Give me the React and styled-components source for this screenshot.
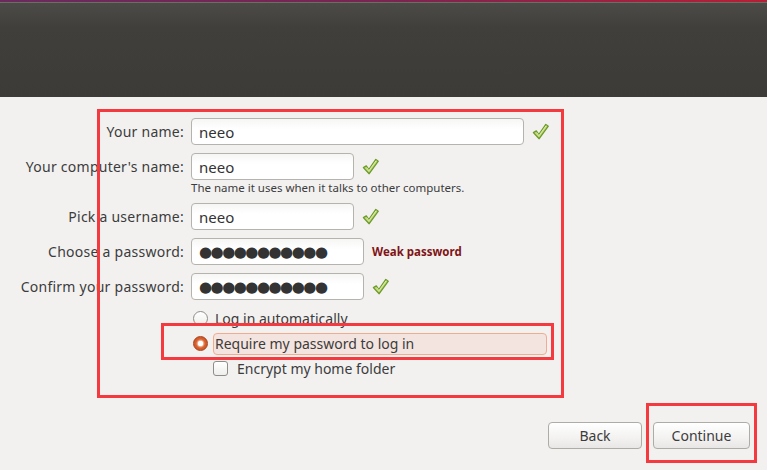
import React from "react";
import styled, { createGlobalStyle } from "styled-components";

const GlobalStyle = createGlobalStyle`
  html, body {
    margin: 0;
    padding: 0;
    background: #f2f1f0;
    font-family: "Noto Sans", "DejaVu Sans", sans-serif;
    color: #3c3c3c;
  }
`;

function Check() {
  return (
    <CheckIcon viewBox="0 0 20 20" width="19" height="19">
      <path
        d="M2.5 11.2 L5.6 9.4 L8.2 13.2 L15.6 2.6 L18.2 4.4 L8.6 17.6 Z"
        fill="#c2db79"
        stroke="#6c9a2c"
        strokeWidth="1.4"
        strokeLinejoin="round"
      />
      <path d="M6 11 L8.3 14.4 L16 3.8" fill="none" stroke="#e6f0b4" strokeWidth="0.9" />
    </CheckIcon>
  );
}

export default function App() {
  return (
    <>
      <GlobalStyle />
      <Page>
        <Header>
          <TopStripe />
          <HeaderLine />
        </Header>
        <Content>
          <Form>
            <Row>
              <Label>Your name:</Label>
              <Field width={333}>neeo</Field>
              <Check />
            </Row>
            <Row>
              <Label>Your computer's name:</Label>
              <Field width={163}>neeo</Field>
              <Check />
            </Row>
            <Hint>The name it uses when it talks to other computers.</Hint>
            <Row>
              <Label>Pick a username:</Label>
              <Field width={163}>neeo</Field>
              <Check />
            </Row>
            <Row>
              <Label>Choose a password:</Label>
              <Field width={173} dots>●●●●●●●●●●●</Field>
              <Weak>Weak password</Weak>
            </Row>
            <Row>
              <Label>Confirm your password:</Label>
              <Field width={173} dots>●●●●●●●●●●●</Field>
              <Check />
            </Row>
            <Options>
              <Option>
                <Radio />
                <OptionText>Log in automatically</OptionText>
              </Option>
              <Option>
                <Radio checked />
                <OptionText focused>Require my password to log in</OptionText>
              </Option>
              <Option indent>
                <Checkbox />
                <OptionText>Encrypt my home folder</OptionText>
              </Option>
            </Options>
          </Form>
          <Buttons>
            <Button width={94}>Back</Button>
            <Button width={97}>Continue</Button>
          </Buttons>
        </Content>
        <Mark left={97} top={109} width={467} height={289} />
        <Mark left={161} top={323} width={393} height={37} />
        <Mark left={646} top={403} width={111} height={60} />
      </Page>
    </>
  );
}

const Page = styled.div`
  position: relative;
  width: 767px;
  height: 470px;
  overflow: hidden;
`;

const Header = styled.div`
  height: 97px;
  background: linear-gradient(to bottom, #4d4c48 0px, #403f3b 28px, #3c3b37 100%);
`;

const TopStripe = styled.div`
  height: 2px;
  background: linear-gradient(to right, #6a2a5e 0%, #7a2452 50%, #b81e35 100%);
`;

const HeaderLine = styled.div`
  height: 1px;
  background: #6e6c63;
`;

const Content = styled.div`
  display: flex;
  flex-direction: column;
  padding-top: 21px;
`;

const Form = styled.div`
  display: flex;
  flex-direction: column;
`;

const Row = styled.div`
  display: flex;
  align-items: center;
  height: 27px;
  margin-bottom: 8px;
`;

const Label = styled.div`
  width: 184px;
  text-align: right;
  font-size: 14px;
  color: #3c3c3c;
  margin-right: 7px;
  letter-spacing: 0.25px;
`;

const Field = styled.div`
  box-sizing: border-box;
  width: ${(p) => p.width}px;
  height: 27px;
  border: 1px solid #b5b3ae;
  border-radius: 4px;
  background: linear-gradient(to bottom, #f6f6f5 0%, #ffffff 40%);
  padding: 0 7px;
  display: flex;
  align-items: center;
  font-size: 15px;
  letter-spacing: ${(p) => (p.dots ? "-1.5px" : "0")};
  color: #333;
  font-family: ${(p) => (p.dots ? '"DejaVu Sans", sans-serif' : '"Noto Sans", sans-serif')};
`;

const CheckIcon = styled.svg`
  margin-left: 7px;
  flex-shrink: 0;
`;

const Hint = styled.div`
  margin: -8px 0 7px 191px;
  height: 16px;
  line-height: 16px;
  font-size: 11.5px;
  color: #3c3c3c;
`;

const Weak = styled.div`
  margin-left: 8px;
  font-size: 11.5px;
  font-weight: bold;
  color: #7f1416;
`;

const Options = styled.div`
  display: flex;
  flex-direction: column;
  padding-left: 193px;
  margin-top: -2px;
`;

const Option = styled.div`
  display: flex;
  align-items: center;
  height: 25px;
  padding-left: ${(p) => (p.indent ? "20px" : "0")};
`;

const Radio = styled.span`
  box-sizing: border-box;
  width: 15px;
  height: 15px;
  border-radius: 50%;
  flex-shrink: 0;
  margin-right: 5px;
  border: 1px solid ${(p) => (p.checked ? "#a8401c" : "#8f8d88")};
  background: ${(p) =>
    p.checked
      ? "radial-gradient(circle, #ffffff 0 2.5px, #f0b090 3px, #d8612e 4.5px, #c24e1d 100%)"
      : "linear-gradient(to bottom, #ffffff, #eeeeec)"};
`;

const Checkbox = styled.span`
  box-sizing: border-box;
  width: 15px;
  height: 15px;
  border-radius: 3px;
  border: 1px solid #8f8d88;
  background: linear-gradient(to bottom, #ffffff, #eeeeec);
  flex-shrink: 0;
  margin-right: 7px;
`;

const OptionText = styled.div`
  font-size: 14px;
  color: #3c3c3c;
  box-sizing: border-box;
  height: 22px;
  line-height: 20px;
  padding: 0 1px;
  border-radius: 4px;
  border: 1px solid ${(p) => (p.focused ? "#f3ab8f" : "transparent")};
  background: ${(p) => (p.focused ? "#f4e4df" : "transparent")};
  flex: ${(p) => (p.focused ? "0 0 334px" : "0 0 auto")};
`;

const Buttons = styled.div`
  display: flex;
  justify-content: flex-end;
  gap: 11px;
  padding-right: 17px;
  margin-top: 41px;
`;

const Button = styled.div`
  box-sizing: border-box;
  width: ${(p) => p.width}px;
  height: 27px;
  border: 1px solid #aeaca7;
  border-radius: 4px;
  background: linear-gradient(to bottom, #ffffff 0%, #f3f2f1 60%, #e8e7e5 100%);
  display: flex;
  align-items: center;
  justify-content: center;
  font-size: 14px;
  color: #3c3c3c;
`;

const Mark = styled.div`
  position: absolute;
  left: ${(p) => p.left}px;
  top: ${(p) => p.top}px;
  width: ${(p) => p.width}px;
  height: ${(p) => p.height}px;
  box-sizing: border-box;
  border: 3px solid #f43a3f;
  pointer-events: none;
`;
